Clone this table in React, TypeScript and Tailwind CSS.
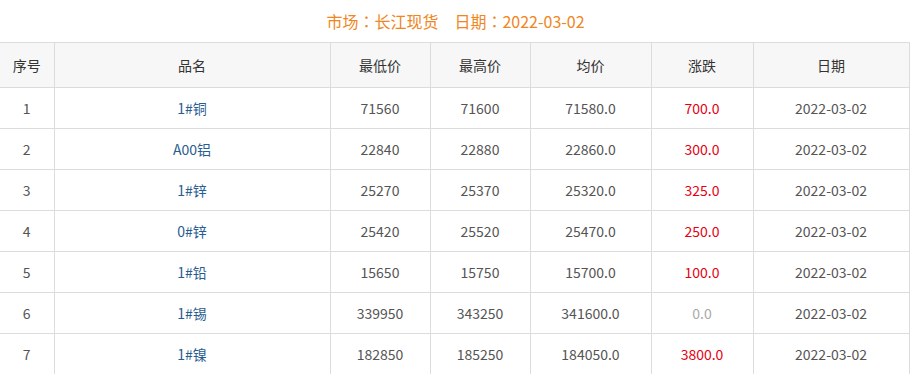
const rows = [
    { no: 1, name: "1#铜", low: "71560", high: "71600", avg: "71580.0", chg: "700.0", date: "2022-03-02" },
    { no: 2, name: "A00铝", low: "22840", high: "22880", avg: "22860.0", chg: "300.0", date: "2022-03-02" },
    { no: 3, name: "1#锌", low: "25270", high: "25370", avg: "25320.0", chg: "325.0", date: "2022-03-02" },
    { no: 4, name: "0#锌", low: "25420", high: "25520", avg: "25470.0", chg: "250.0", date: "2022-03-02" },
    { no: 5, name: "1#铅", low: "15650", high: "15750", avg: "15700.0", chg: "100.0", date: "2022-03-02" },
    { no: 6, name: "1#锡", low: "339950", high: "343250", avg: "341600.0", chg: "0.0", date: "2022-03-02" },
    { no: 7, name: "1#镍", low: "182850", high: "185250", avg: "184050.0", chg: "3800.0", date: "2022-03-02" },
];

const heads = ["序号", "品名", "最低价", "最高价", "均价", "涨跌", "日期"];

function App() {
    return (
        <div className="w-[911px] h-[374px] overflow-hidden bg-white" style={{ fontFamily: '"Microsoft YaHei", "Noto Sans CJK SC", sans-serif' }}>
            <div className="h-[42px] flex items-center justify-center text-[16px] text-[#f0861d]">
                市场<span style={{ fontFamily: '"Noto Sans CJK TC", sans-serif' }}>：</span>长江现货
                <span className="ml-[16px]">日期<span style={{ fontFamily: '"Noto Sans CJK TC", sans-serif' }}>：</span>2022-03-02</span>
            </div>
            <table className="table-fixed border-collapse w-[909px] text-[14px] text-center">
                <colgroup>
                    <col className="w-[54px]" />
                    <col className="w-[276px]" />
                    <col className="w-[100px]" />
                    <col className="w-[100px]" />
                    <col className="w-[121px]" />
                    <col className="w-[102px]" />
                    <col className="w-[156px]" />
                </colgroup>
                <thead>
                    <tr className="h-[45px] bg-[#f7f7f7] text-[#333]">
                        {heads.map((h, i) => (
                            <th key={h} className={`font-normal border-t border-b border-[#dcdcdc] ${i > 0 ? "border-l" : ""} border-r`}>{h}</th>
                        ))}
                    </tr>
                </thead>
                <tbody className="text-[#555]">
                    {rows.map((r) => (
                        <tr key={r.no} className="h-[41px]">
                            <td className="border-b border-r border-[#dcdcdc]">{r.no}</td>
                            <td className="border border-t-0 border-[#dcdcdc] text-[#2a5d8f]">{r.name}</td>
                            <td className="border border-t-0 border-[#dcdcdc]">{r.low}</td>
                            <td className="border border-t-0 border-[#dcdcdc]">{r.high}</td>
                            <td className="border border-t-0 border-[#dcdcdc]">{r.avg}</td>
                            <td className={`border border-t-0 border-[#dcdcdc] ${r.chg === "0.0" ? "text-[#aaa]" : "text-[#e60012]"}`}>{r.chg}</td>
                            <td className="border border-t-0 border-[#dcdcdc]">{r.date}</td>
                        </tr>
                    ))}
                </tbody>
            </table>
        </div>
    );
}

export default App;
